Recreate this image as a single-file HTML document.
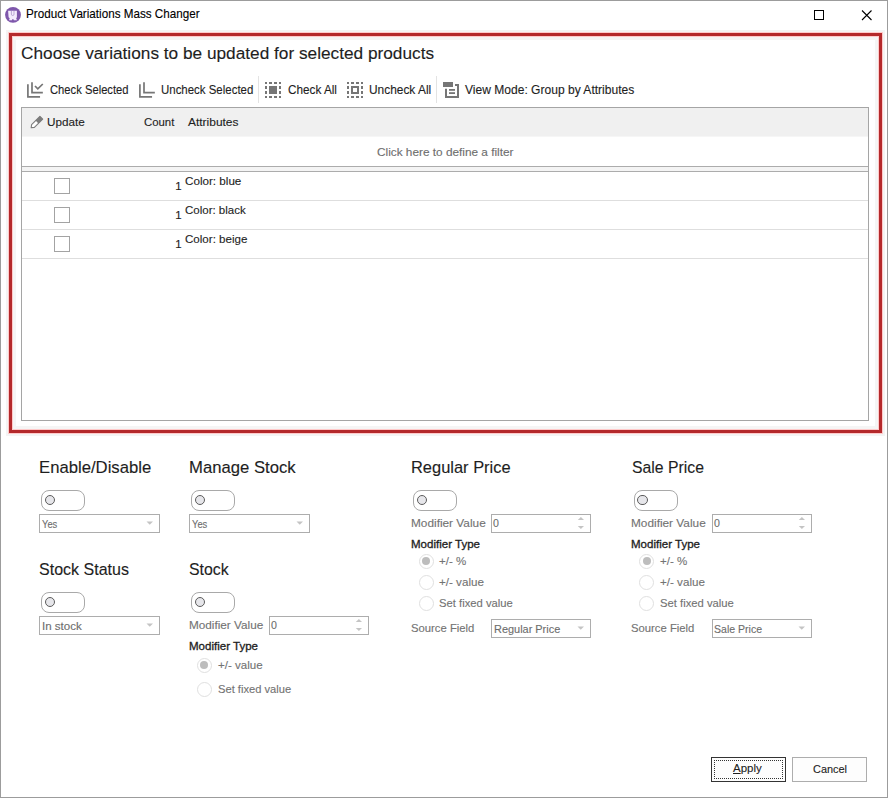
<!DOCTYPE html>
<html><head><meta charset="utf-8"><style>
html,body{margin:0;padding:0;background:#fff;}
body{width:888px;height:798px;position:relative;overflow:hidden;font-family:"Liberation Sans",sans-serif;}
.t{position:absolute;white-space:nowrap;-webkit-text-stroke:0.12px currentColor;}
u{text-decoration:underline;text-underline-offset:1px;}
</style></head><body>
<div style="position:absolute;left:0px;top:0px;width:888px;height:798px;box-sizing:border-box;border:1px solid #9c9c9c;background:#fff"></div>
<svg style="position:absolute;left:0;top:0" width="30" height="30">
<circle cx="13" cy="14.8" r="7.9" fill="#7e57ab"/>
<path d="M8.1 10.8 H16.9 V17.2 L16.2 18.2 L16.9 20.2 H13.9 L13.2 19 H12.6 L11.9 20.2 H9 L9.7 18.2 L8.6 17.2 Z" fill="#f4ecfd"/>
<path d="M11.4 10.9 V14.2 Q11.4 15.5 12.7 15.5 Q14 15.5 14 14.2 V10.9" fill="none" stroke="#a48cc4" stroke-width="0.7"/>
</svg>
<div class="t" style="left:26.14px;top:7.77px;font-size:12.2px;line-height:12.2px;color:#000;font-weight:normal;transform:scaleX(0.9575);transform-origin:0 0;">Product Variations Mass Changer</div>
<svg style="position:absolute;left:800px;top:0" width="88" height="32">
<rect x="14.5" y="10.5" width="9" height="9" fill="none" stroke="#000" stroke-width="1"/>
<path d="M62 10.5 L71.5 20 M71.5 10.5 L62 20" stroke="#000" stroke-width="1.1"/>
</svg>
<div style="position:absolute;left:9px;top:33px;width:873px;height:400px;box-sizing:border-box;border:3px solid #b4292b;box-shadow:0 0 0 1px #ffcaca, 0 0 0 3px rgba(0,0,0,0.045), inset 0 0 0 1px #ffcaca, inset 0 0 0 4px rgba(0,0,0,0.04)"></div>
<div class="t" style="left:21.30px;top:44.54px;font-size:17.2px;line-height:17.2px;color:#1e1e1e;font-weight:normal;transform:scaleX(1.0031);transform-origin:0 0;">Choose variations to be updated for selected products</div>
<svg style="position:absolute;left:0;top:0" width="888" height="110">
<g fill="none" stroke="#767676" stroke-width="1.7" stroke-linecap="square">
<path d="M27.9 85 V96.8 H39.2"/>
<path d="M32 83 V92.6 H42"/>
<path d="M35 86 L37.8 88.9 L42.8 84" stroke-linecap="butt"/>
<path d="M139.9 85 V96.8 H151.2"/>
<path d="M144 83 V92.6 H154"/>
</g>
<g fill="#767676">
<rect x="265" y="82" width="2" height="2"/><rect x="269" y="82" width="3" height="2"/><rect x="274" y="82" width="3" height="2"/><rect x="279" y="82" width="2" height="2"/><rect x="265" y="96" width="2" height="2"/><rect x="269" y="96" width="3" height="2"/><rect x="274" y="96" width="3" height="2"/><rect x="279" y="96" width="2" height="2"/><rect x="265" y="86" width="2" height="3"/><rect x="265" y="91" width="2" height="3"/><rect x="279" y="86" width="2" height="3"/><rect x="279" y="91" width="2" height="3"/><rect x="347" y="82" width="2" height="2"/><rect x="351" y="82" width="3" height="2"/><rect x="356" y="82" width="3" height="2"/><rect x="361" y="82" width="2" height="2"/><rect x="347" y="96" width="2" height="2"/><rect x="351" y="96" width="3" height="2"/><rect x="356" y="96" width="3" height="2"/><rect x="361" y="96" width="2" height="2"/><rect x="347" y="86" width="2" height="3"/><rect x="347" y="91" width="2" height="3"/><rect x="361" y="86" width="2" height="3"/><rect x="361" y="91" width="2" height="3"/>
<rect x="269" y="86" width="8" height="8"/>
<path d="M351 86 h8 v8 h-8 z M353 88 v4 h4 v-4 z" fill-rule="evenodd"/>
<rect x="443" y="82" width="10" height="5"/>
<path d="M455 84 h4 v14 h-14 v-9.2 h2 v7.2 h10 v-10 h-2 z"/>
<rect x="449" y="89" width="6" height="1.8"/>
<rect x="449" y="92.2" width="6" height="1.8"/>
</g>
<rect x="258" y="76" width="1" height="27" fill="#e3e3e3"/>
<rect x="436" y="76" width="1" height="27" fill="#e3e3e3"/>
</svg>
<div class="t" style="left:50.00px;top:84.62px;font-size:11.9px;line-height:11.9px;color:#1e1e1e;font-weight:normal;transform:scaleX(0.9435);transform-origin:0 0;">Check Selected</div>
<div class="t" style="left:160.90px;top:84.62px;font-size:11.9px;line-height:11.9px;color:#1e1e1e;font-weight:normal;transform:scaleX(0.9630);transform-origin:0 0;">Uncheck Selected</div>
<div class="t" style="left:287.60px;top:84.62px;font-size:11.9px;line-height:11.9px;color:#1e1e1e;font-weight:normal;transform:scaleX(0.9883);transform-origin:0 0;">Check All</div>
<div class="t" style="left:369.30px;top:84.62px;font-size:11.9px;line-height:11.9px;color:#1e1e1e;font-weight:normal;transform:scaleX(1.0010);transform-origin:0 0;">Uncheck All</div>
<div class="t" style="left:465.40px;top:84.62px;font-size:11.9px;line-height:11.9px;color:#1e1e1e;font-weight:normal;transform:scaleX(1.0137);transform-origin:0 0;">View Mode: Group by Attributes</div>
<div style="position:absolute;left:21px;top:107px;width:848px;height:314px;box-sizing:border-box;border:1px solid #a5a5a5;background:#fff"></div>
<div style="position:absolute;left:22px;top:108px;width:846px;height:28px;background:#f0f0f0"></div>
<div style="position:absolute;left:22px;top:136px;width:846px;height:1px;background:#f6f6f6"></div>
<div style="position:absolute;left:22px;top:166px;width:846px;height:1px;background:#acacac"></div>
<div style="position:absolute;left:22px;top:167px;width:846px;height:4px;background:#f4f4f4"></div>
<div style="position:absolute;left:22px;top:171px;width:846px;height:1px;background:#acacac"></div>
<div style="position:absolute;left:22px;top:200px;width:846px;height:1px;background:#dedede"></div>
<div style="position:absolute;left:22px;top:229px;width:846px;height:1px;background:#dedede"></div>
<div style="position:absolute;left:22px;top:258px;width:846px;height:1px;background:#dedede"></div>
<svg style="position:absolute;left:0;top:0" width="60" height="140">
<path d="M31.2 127.6 L31.6 124.6 L39.9 116.3 L42.7 119.1 L34.4 127.4 Z" fill="#fff" stroke="#7c7c7c" stroke-width="1.1" stroke-linejoin="round"/>
<path d="M35.6 120.6 L39.9 116.3 L42.7 119.1 L38.4 123.4 Z" fill="#7c7c7c"/>
</svg>
<div class="t" style="left:47.40px;top:115.78px;font-size:11.6px;line-height:11.6px;color:#1e1e1e;font-weight:normal;transform:scaleX(1.0098);transform-origin:0 0;">Update</div>
<div class="t" style="left:143.50px;top:115.78px;font-size:11.6px;line-height:11.6px;color:#1e1e1e;font-weight:normal;transform:scaleX(0.9806);transform-origin:0 0;">Count</div>
<div class="t" style="left:188.10px;top:115.78px;font-size:11.6px;line-height:11.6px;color:#1e1e1e;font-weight:normal;transform:scaleX(1.0310);transform-origin:0 0;">Attributes</div>
<div class="t" style="left:376.60px;top:146.18px;font-size:11.6px;line-height:11.6px;color:#6e6e6e;font-weight:normal;transform:scaleX(1.0181);transform-origin:0 0;">Click here to define a filter</div>
<div style="position:absolute;left:54px;top:178px;width:16px;height:16px;box-sizing:border-box;border:1px solid #a3a3a3;background:#fff"></div>
<div class="t" style="left:175.20px;top:180.85px;font-size:11.4px;line-height:11.4px;color:#1e1e1e;font-weight:normal;">1</div>
<div class="t" style="left:184.60px;top:175.95px;font-size:11.4px;line-height:11.4px;color:#1e1e1e;font-weight:normal;transform:scaleX(1.0228);transform-origin:0 0;">Color: blue</div>
<div style="position:absolute;left:54px;top:207px;width:16px;height:16px;box-sizing:border-box;border:1px solid #a3a3a3;background:#fff"></div>
<div class="t" style="left:175.20px;top:209.85px;font-size:11.4px;line-height:11.4px;color:#1e1e1e;font-weight:normal;">1</div>
<div class="t" style="left:184.60px;top:204.95px;font-size:11.4px;line-height:11.4px;color:#1e1e1e;font-weight:normal;transform:scaleX(1.0092);transform-origin:0 0;">Color: black</div>
<div style="position:absolute;left:54px;top:236px;width:16px;height:16px;box-sizing:border-box;border:1px solid #a3a3a3;background:#fff"></div>
<div class="t" style="left:175.20px;top:238.85px;font-size:11.4px;line-height:11.4px;color:#1e1e1e;font-weight:normal;">1</div>
<div class="t" style="left:184.60px;top:233.95px;font-size:11.4px;line-height:11.4px;color:#1e1e1e;font-weight:normal;transform:scaleX(1.0150);transform-origin:0 0;">Color: beige</div>
<div class="t" style="left:39.17px;top:459.18px;font-size:16.2px;line-height:16.2px;color:#1e1e1e;font-weight:normal;transform:scaleX(1.0307);transform-origin:0 0;">Enable/Disable</div>
<div style="position:absolute;left:41px;top:490px;width:44px;height:21px;box-sizing:border-box;border:1px solid #a9a9a9;border-radius:8px;background:#fff"></div>
<div style="position:absolute;left:44.8px;top:495px;width:10.2px;height:10.2px;box-sizing:border-box;border:1.5px solid #5c5c5c;border-radius:50%;background:#e6e6ea"></div>
<div style="position:absolute;left:39px;top:514px;width:121px;height:19px;box-sizing:border-box;border:1px solid #adadad;background:#fff"></div>
<div class="t" style="left:41.50px;top:518.55px;font-size:11.4px;line-height:11.4px;color:#6d6d6d;font-weight:normal;transform:scaleX(0.8207);transform-origin:0 0;">Yes</div>
<svg style="position:absolute;left:146px;top:521px" width="8" height="5"><path d="M0.5 0.5 H7 L3.75 3.8 Z" fill="#c4c4c4"/></svg>
<div class="t" style="left:188.77px;top:459.18px;font-size:16.2px;line-height:16.2px;color:#1e1e1e;font-weight:normal;transform:scaleX(1.0301);transform-origin:0 0;">Manage Stock</div>
<div style="position:absolute;left:191px;top:490px;width:44px;height:21px;box-sizing:border-box;border:1px solid #a9a9a9;border-radius:8px;background:#fff"></div>
<div style="position:absolute;left:194.8px;top:495px;width:10.2px;height:10.2px;box-sizing:border-box;border:1.5px solid #5c5c5c;border-radius:50%;background:#e6e6ea"></div>
<div style="position:absolute;left:189px;top:514px;width:121px;height:19px;box-sizing:border-box;border:1px solid #adadad;background:#fff"></div>
<div class="t" style="left:191.50px;top:518.55px;font-size:11.4px;line-height:11.4px;color:#6d6d6d;font-weight:normal;transform:scaleX(0.8207);transform-origin:0 0;">Yes</div>
<svg style="position:absolute;left:296px;top:521px" width="8" height="5"><path d="M0.5 0.5 H7 L3.75 3.8 Z" fill="#c4c4c4"/></svg>
<div class="t" style="left:38.90px;top:560.98px;font-size:16.2px;line-height:16.2px;color:#1e1e1e;font-weight:normal;transform:scaleX(0.9892);transform-origin:0 0;">Stock Status</div>
<div style="position:absolute;left:41px;top:592px;width:44px;height:21px;box-sizing:border-box;border:1px solid #a9a9a9;border-radius:8px;background:#fff"></div>
<div style="position:absolute;left:44.8px;top:597px;width:10.2px;height:10.2px;box-sizing:border-box;border:1.5px solid #5c5c5c;border-radius:50%;background:#e6e6ea"></div>
<div style="position:absolute;left:39px;top:616px;width:121px;height:19px;box-sizing:border-box;border:1px solid #adadad;background:#fff"></div>
<div class="t" style="left:41.89px;top:620.55px;font-size:11.4px;line-height:11.4px;color:#6d6d6d;font-weight:normal;transform:scaleX(1.0141);transform-origin:0 0;">In stock</div>
<svg style="position:absolute;left:146px;top:623px" width="8" height="5"><path d="M0.5 0.5 H7 L3.75 3.8 Z" fill="#c4c4c4"/></svg>
<div class="t" style="left:188.50px;top:561.08px;font-size:16.2px;line-height:16.2px;color:#1e1e1e;font-weight:normal;transform:scaleX(0.9809);transform-origin:0 0;">Stock</div>
<div style="position:absolute;left:191px;top:592px;width:44px;height:21px;box-sizing:border-box;border:1px solid #a9a9a9;border-radius:8px;background:#fff"></div>
<div style="position:absolute;left:194.8px;top:597px;width:10.2px;height:10.2px;box-sizing:border-box;border:1.5px solid #5c5c5c;border-radius:50%;background:#e6e6ea"></div>
<div class="t" style="left:188.70px;top:619.56px;font-size:11.5px;line-height:11.5px;color:#737373;font-weight:normal;transform:scaleX(1.0213);transform-origin:0 0;">Modifier Value</div>
<div style="position:absolute;left:269px;top:616px;width:100px;height:19px;box-sizing:border-box;border:1px solid #adadad;background:#fff"></div>
<div class="t" style="left:271.30px;top:619.75px;font-size:11.4px;line-height:11.4px;color:#6d6d6d;font-weight:normal;transform:scaleX(0.9333);transform-origin:0 0;">0</div>
<svg style="position:absolute;left:355px;top:618px" width="8" height="15"><path d="M0.8 4 L3.9 1 L7 4 Z" fill="#c4c4c4"/><path d="M0.8 10 L3.9 13 L7 10 Z" fill="#c4c4c4"/></svg>
<div class="t" style="left:188.50px;top:640.63px;font-size:11.3px;line-height:11.3px;color:#1e1e1e;font-weight:normal;transform:scaleX(1.0203);transform-origin:0 0;-webkit-text-stroke:0.32px #1e1e1e">Modifier Type</div>
<div style="position:absolute;left:196.5px;top:657.5px;width:15px;height:15px;box-sizing:border-box;border:1px solid #e0e0e0;border-radius:50%;background:#fff"></div>
<div style="position:absolute;left:200px;top:661px;width:8px;height:8px;border-radius:50%;background:#bdbdbd"></div>
<div class="t" style="left:218.20px;top:659.66px;font-size:11.5px;line-height:11.5px;color:#737373;font-weight:normal;transform:scaleX(1.0038);transform-origin:0 0;">+/- value</div>
<div style="position:absolute;left:196.5px;top:681.5px;width:15px;height:15px;box-sizing:border-box;border:1px solid #e0e0e0;border-radius:50%;background:#fff"></div>
<div class="t" style="left:217.60px;top:684.00px;font-size:11.1px;line-height:11.1px;color:#737373;font-weight:normal;transform:scaleX(1.0055);transform-origin:0 0;">Set fixed value</div>
<div class="t" style="left:410.78px;top:459.18px;font-size:16.2px;line-height:16.2px;color:#1e1e1e;font-weight:normal;transform:scaleX(1.0158);transform-origin:0 0;">Regular Price</div>
<div style="position:absolute;left:413.0px;top:490px;width:44px;height:21px;box-sizing:border-box;border:1px solid #a9a9a9;border-radius:8px;background:#fff"></div>
<div style="position:absolute;left:416.8px;top:495px;width:10.2px;height:10.2px;box-sizing:border-box;border:1.5px solid #5c5c5c;border-radius:50%;background:#e6e6ea"></div>
<div class="t" style="left:410.80px;top:518.26px;font-size:11.5px;line-height:11.5px;color:#737373;font-weight:normal;transform:scaleX(1.0282);transform-origin:0 0;">Modifier Value</div>
<div style="position:absolute;left:491.1px;top:514px;width:100px;height:19px;box-sizing:border-box;border:1px solid #adadad;background:#fff"></div>
<div class="t" style="left:493.40px;top:517.75px;font-size:11.4px;line-height:11.4px;color:#6d6d6d;font-weight:normal;transform:scaleX(0.9333);transform-origin:0 0;">0</div>
<svg style="position:absolute;left:577.1px;top:516px" width="8" height="15"><path d="M0.8 4 L3.9 1 L7 4 Z" fill="#c4c4c4"/><path d="M0.8 10 L3.9 13 L7 10 Z" fill="#c4c4c4"/></svg>
<div class="t" style="left:410.60px;top:539.03px;font-size:11.3px;line-height:11.3px;color:#1e1e1e;font-weight:normal;transform:scaleX(1.0203);transform-origin:0 0;-webkit-text-stroke:0.32px #1e1e1e">Modifier Type</div>
<div style="position:absolute;left:418.5px;top:553.5px;width:15px;height:15px;box-sizing:border-box;border:1px solid #e0e0e0;border-radius:50%;background:#fff"></div>
<div style="position:absolute;left:422.0px;top:557px;width:8px;height:8px;border-radius:50%;background:#bdbdbd"></div>
<div class="t" style="left:439.00px;top:555.66px;font-size:11.5px;line-height:11.5px;color:#737373;font-weight:normal;transform:scaleX(1.0024);transform-origin:0 0;">+/- %</div>
<div style="position:absolute;left:418.5px;top:574.5px;width:15px;height:15px;box-sizing:border-box;border:1px solid #e0e0e0;border-radius:50%;background:#fff"></div>
<div class="t" style="left:439.00px;top:576.66px;font-size:11.5px;line-height:11.5px;color:#737373;font-weight:normal;transform:scaleX(1.0106);transform-origin:0 0;">+/- value</div>
<div style="position:absolute;left:418.5px;top:595.5px;width:15px;height:15px;box-sizing:border-box;border:1px solid #e0e0e0;border-radius:50%;background:#fff"></div>
<div class="t" style="left:439.00px;top:598.00px;font-size:11.1px;line-height:11.1px;color:#737373;font-weight:normal;transform:scaleX(1.0138);transform-origin:0 0;">Set fixed value</div>
<div class="t" style="left:410.80px;top:623.00px;font-size:11.1px;line-height:11.1px;color:#737373;font-weight:normal;transform:scaleX(1.0176);transform-origin:0 0;">Source Field</div>
<div style="position:absolute;left:491.3px;top:619px;width:100px;height:19px;box-sizing:border-box;border:1px solid #adadad;background:#fff"></div>
<div class="t" style="left:493.80px;top:623.55px;font-size:11.4px;line-height:11.4px;color:#6d6d6d;font-weight:normal;transform:scaleX(0.9597);transform-origin:0 0;">Regular Price</div>
<svg style="position:absolute;left:577.3px;top:626px" width="8" height="5"><path d="M0.5 0.5 H7 L3.75 3.8 Z" fill="#c4c4c4"/></svg>
<div class="t" style="left:632.40px;top:459.18px;font-size:16.2px;line-height:16.2px;color:#1e1e1e;font-weight:normal;transform:scaleX(0.9746);transform-origin:0 0;">Sale Price</div>
<div style="position:absolute;left:633.6px;top:490px;width:44px;height:21px;box-sizing:border-box;border:1px solid #a9a9a9;border-radius:8px;background:#fff"></div>
<div style="position:absolute;left:637.4px;top:495px;width:10.2px;height:10.2px;box-sizing:border-box;border:1.5px solid #5c5c5c;border-radius:50%;background:#e6e6ea"></div>
<div class="t" style="left:631.40px;top:518.26px;font-size:11.5px;line-height:11.5px;color:#737373;font-weight:normal;transform:scaleX(1.0282);transform-origin:0 0;">Modifier Value</div>
<div style="position:absolute;left:711.6999999999999px;top:514px;width:100px;height:19px;box-sizing:border-box;border:1px solid #adadad;background:#fff"></div>
<div class="t" style="left:714.00px;top:517.75px;font-size:11.4px;line-height:11.4px;color:#6d6d6d;font-weight:normal;transform:scaleX(0.9333);transform-origin:0 0;">0</div>
<svg style="position:absolute;left:797.6999999999999px;top:516px" width="8" height="15"><path d="M0.8 4 L3.9 1 L7 4 Z" fill="#c4c4c4"/><path d="M0.8 10 L3.9 13 L7 10 Z" fill="#c4c4c4"/></svg>
<div class="t" style="left:631.20px;top:539.03px;font-size:11.3px;line-height:11.3px;color:#1e1e1e;font-weight:normal;transform:scaleX(1.0203);transform-origin:0 0;-webkit-text-stroke:0.32px #1e1e1e">Modifier Type</div>
<div style="position:absolute;left:639.1px;top:553.5px;width:15px;height:15px;box-sizing:border-box;border:1px solid #e0e0e0;border-radius:50%;background:#fff"></div>
<div style="position:absolute;left:642.6px;top:557px;width:8px;height:8px;border-radius:50%;background:#bdbdbd"></div>
<div class="t" style="left:659.60px;top:555.66px;font-size:11.5px;line-height:11.5px;color:#737373;font-weight:normal;transform:scaleX(1.0024);transform-origin:0 0;">+/- %</div>
<div style="position:absolute;left:639.1px;top:574.5px;width:15px;height:15px;box-sizing:border-box;border:1px solid #e0e0e0;border-radius:50%;background:#fff"></div>
<div class="t" style="left:659.60px;top:576.66px;font-size:11.5px;line-height:11.5px;color:#737373;font-weight:normal;transform:scaleX(1.0106);transform-origin:0 0;">+/- value</div>
<div style="position:absolute;left:639.1px;top:595.5px;width:15px;height:15px;box-sizing:border-box;border:1px solid #e0e0e0;border-radius:50%;background:#fff"></div>
<div class="t" style="left:659.60px;top:598.00px;font-size:11.1px;line-height:11.1px;color:#737373;font-weight:normal;transform:scaleX(1.0138);transform-origin:0 0;">Set fixed value</div>
<div class="t" style="left:631.40px;top:623.00px;font-size:11.1px;line-height:11.1px;color:#737373;font-weight:normal;transform:scaleX(1.0176);transform-origin:0 0;">Source Field</div>
<div style="position:absolute;left:711.9px;top:619px;width:100px;height:19px;box-sizing:border-box;border:1px solid #adadad;background:#fff"></div>
<div class="t" style="left:714.40px;top:623.55px;font-size:11.4px;line-height:11.4px;color:#6d6d6d;font-weight:normal;transform:scaleX(0.9248);transform-origin:0 0;">Sale Price</div>
<svg style="position:absolute;left:797.9px;top:626px" width="8" height="5"><path d="M0.5 0.5 H7 L3.75 3.8 Z" fill="#c4c4c4"/></svg>
<div style="position:absolute;left:711px;top:757px;width:75px;height:25px;box-sizing:border-box;border:1px solid #333;background:#fdfdfd"></div>
<div style="position:absolute;left:714px;top:760px;width:69px;height:19px;box-sizing:border-box;border:1px dotted #333"></div>
<div class="t" style="left:733.00px;top:763.31px;font-size:11.8px;line-height:11.8px;color:#1e1e1e;font-weight:normal;transform:scaleX(0.9726);transform-origin:0 0;"><u>A</u>pply</div>
<div style="position:absolute;left:792px;top:757px;width:75px;height:25px;box-sizing:border-box;border:1px solid #adadad;background:#fdfdfd"></div>
<div class="t" style="left:812.50px;top:763.65px;font-size:11.4px;line-height:11.4px;color:#1e1e1e;font-weight:normal;transform:scaleX(0.9592);transform-origin:0 0;">Cancel</div>
</body></html>
